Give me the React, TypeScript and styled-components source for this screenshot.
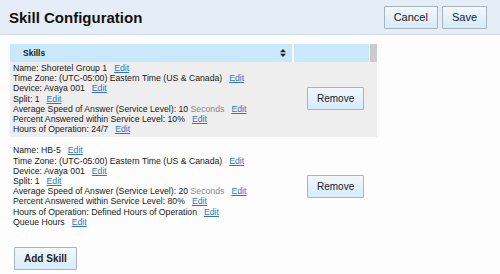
import styled, { createGlobalStyle } from 'styled-components'

const GlobalStyle = createGlobalStyle`
  html, body {
    margin: 0;
    padding: 0;
    background: #fdfdfd;
    font-family: 'Liberation Sans', Arial, sans-serif;
    color: #1a1a1a;
  }
`

const Page = styled.div`
  width: 500px;
  height: 274px;
  overflow: hidden;
`

const TopBar = styled.div`
  display: flex;
  align-items: center;
  justify-content: space-between;
  height: 34px;
  padding: 0 13px 0 9px;
  background: #e5eef6;
  border-bottom: 1px solid #d3dbe2;
`

const Title = styled.h1`
  margin: 0;
  font-size: 15px;
  font-weight: bold;
  color: #111;
`

const ButtonGroup = styled.div`
  display: flex;
  gap: 4px;
`

const Button = styled.button<{ $size?: number, $bold?: boolean }>`
  height: 23px;
  padding: 0 9px;
  font-family: inherit;
  font-size: ${props => props.$size ?? 10}px;
  font-weight: ${props => (props.$bold ? 'bold' : 'normal')};
  color: #222;
  background: linear-gradient(#f2f8fd, #d6ebfa);
  border: 1px solid #a9b3bc;
  border-radius: 1px;
  cursor: pointer;
`

const Content = styled.div`
  padding: 9px 0 0 10px;
`

const Table = styled.div`
  width: 367px;
`

const HeadRow = styled.div`
  display: flex;
  height: 18px;
`

const HeadCell = styled.div<{ $width: number }>`
  display: flex;
  align-items: center;
  justify-content: space-between;
  width: ${props => props.$width}px;
  padding: 0 6px 0 13px;
  box-sizing: border-box;
  margin-right: 2px;
  background: #c9e8fd;
  font-size: 8.5px;
  font-weight: bold;
  color: #1a1a1a;
`

const ScrollThumb = styled.div`
  width: 7px;
  margin-left: -1px;
  background: #cbcbcb;
`

const Row = styled.div<{ $shaded?: boolean }>`
  display: flex;
  align-items: center;
  background: ${props => (props.$shaded ? '#eeeeee' : 'transparent')};
  padding: ${props => (props.$shaded ? '1px 0 3px' : '8px 0 8px')};
`

const Details = styled.div`
  flex: 1;
  padding-left: 3px;
  font-size: 8.7px;
  line-height: 10.2px;
`

const Line = styled.div``

const Muted = styled.span`
  color: #8a8a8a;
`

const EditLink = styled.a`
  margin-left: 7px;
  color: #2f74cc;
  text-decoration: underline;
  cursor: pointer;
`

const Actions = styled.div`
  width: 83px;
  padding-left: 13px;
  box-sizing: border-box;
`

const Footer = styled.div`
  padding: 12px 0 0 4px;
`

function SortIcon() {
  return (
    <svg width="6" height="8" viewBox="0 0 6 8">
      <path d="M3 0 L6 3.3 L0 3.3 Z M3 8 L6 4.7 L0 4.7 Z" fill="#222" />
    </svg>
  )
}

type Field = { label: string, extra?: string, edit?: boolean }

const skills: Field[][] = [
  [
    { label: 'Name: Shoretel Group 1', edit: true },
    { label: 'Time Zone: (UTC-05:00) Eastern Time (US & Canada)', edit: true },
    { label: 'Device: Avaya 001', edit: true },
    { label: 'Split: 1', edit: true },
    { label: 'Average Speed of Answer (Service Level): 10', extra: 'Seconds', edit: true },
    { label: 'Percent Answered within Service Level: 10%', edit: true },
    { label: 'Hours of Operation: 24/7', edit: true },
  ],
  [
    { label: 'Name: HB-5', edit: true },
    { label: 'Time Zone: (UTC-05:00) Eastern Time (US & Canada)', edit: true },
    { label: 'Device: Avaya 001', edit: true },
    { label: 'Split: 1', edit: true },
    { label: 'Average Speed of Answer (Service Level): 20', extra: 'Seconds', edit: true },
    { label: 'Percent Answered within Service Level: 80%', edit: true },
    { label: 'Hours of Operation: Defined Hours of Operation', edit: true },
    { label: 'Queue Hours', edit: true },
  ],
]

export default function App() {
  return (
    <Page>
      <GlobalStyle />
      <TopBar>
        <Title>Skill Configuration</Title>
        <ButtonGroup>
          <Button $size={11}>Cancel</Button>
          <Button $size={11}>Save</Button>
        </ButtonGroup>
      </TopBar>
      <Content>
        <Table>
          <HeadRow>
            <HeadCell $width={282}>
              Skills
              <SortIcon />
            </HeadCell>
            <HeadCell $width={75} />
            <ScrollThumb />
          </HeadRow>
          {skills.map((fields, i) => (
            <Row key={i} $shaded={i % 2 === 0}>
              <Details>
                {fields.map((f, j) => (
                  <Line key={j}>
                    {f.label}
                    {f.extra && <Muted> {f.extra}</Muted>}
                    {f.edit && <EditLink>Edit</EditLink>}
                  </Line>
                ))}
              </Details>
              <Actions>
                <Button>Remove</Button>
              </Actions>
            </Row>
          ))}
        </Table>
        <Footer>
          <Button $bold>Add Skill</Button>
        </Footer>
      </Content>
    </Page>
  )
}
